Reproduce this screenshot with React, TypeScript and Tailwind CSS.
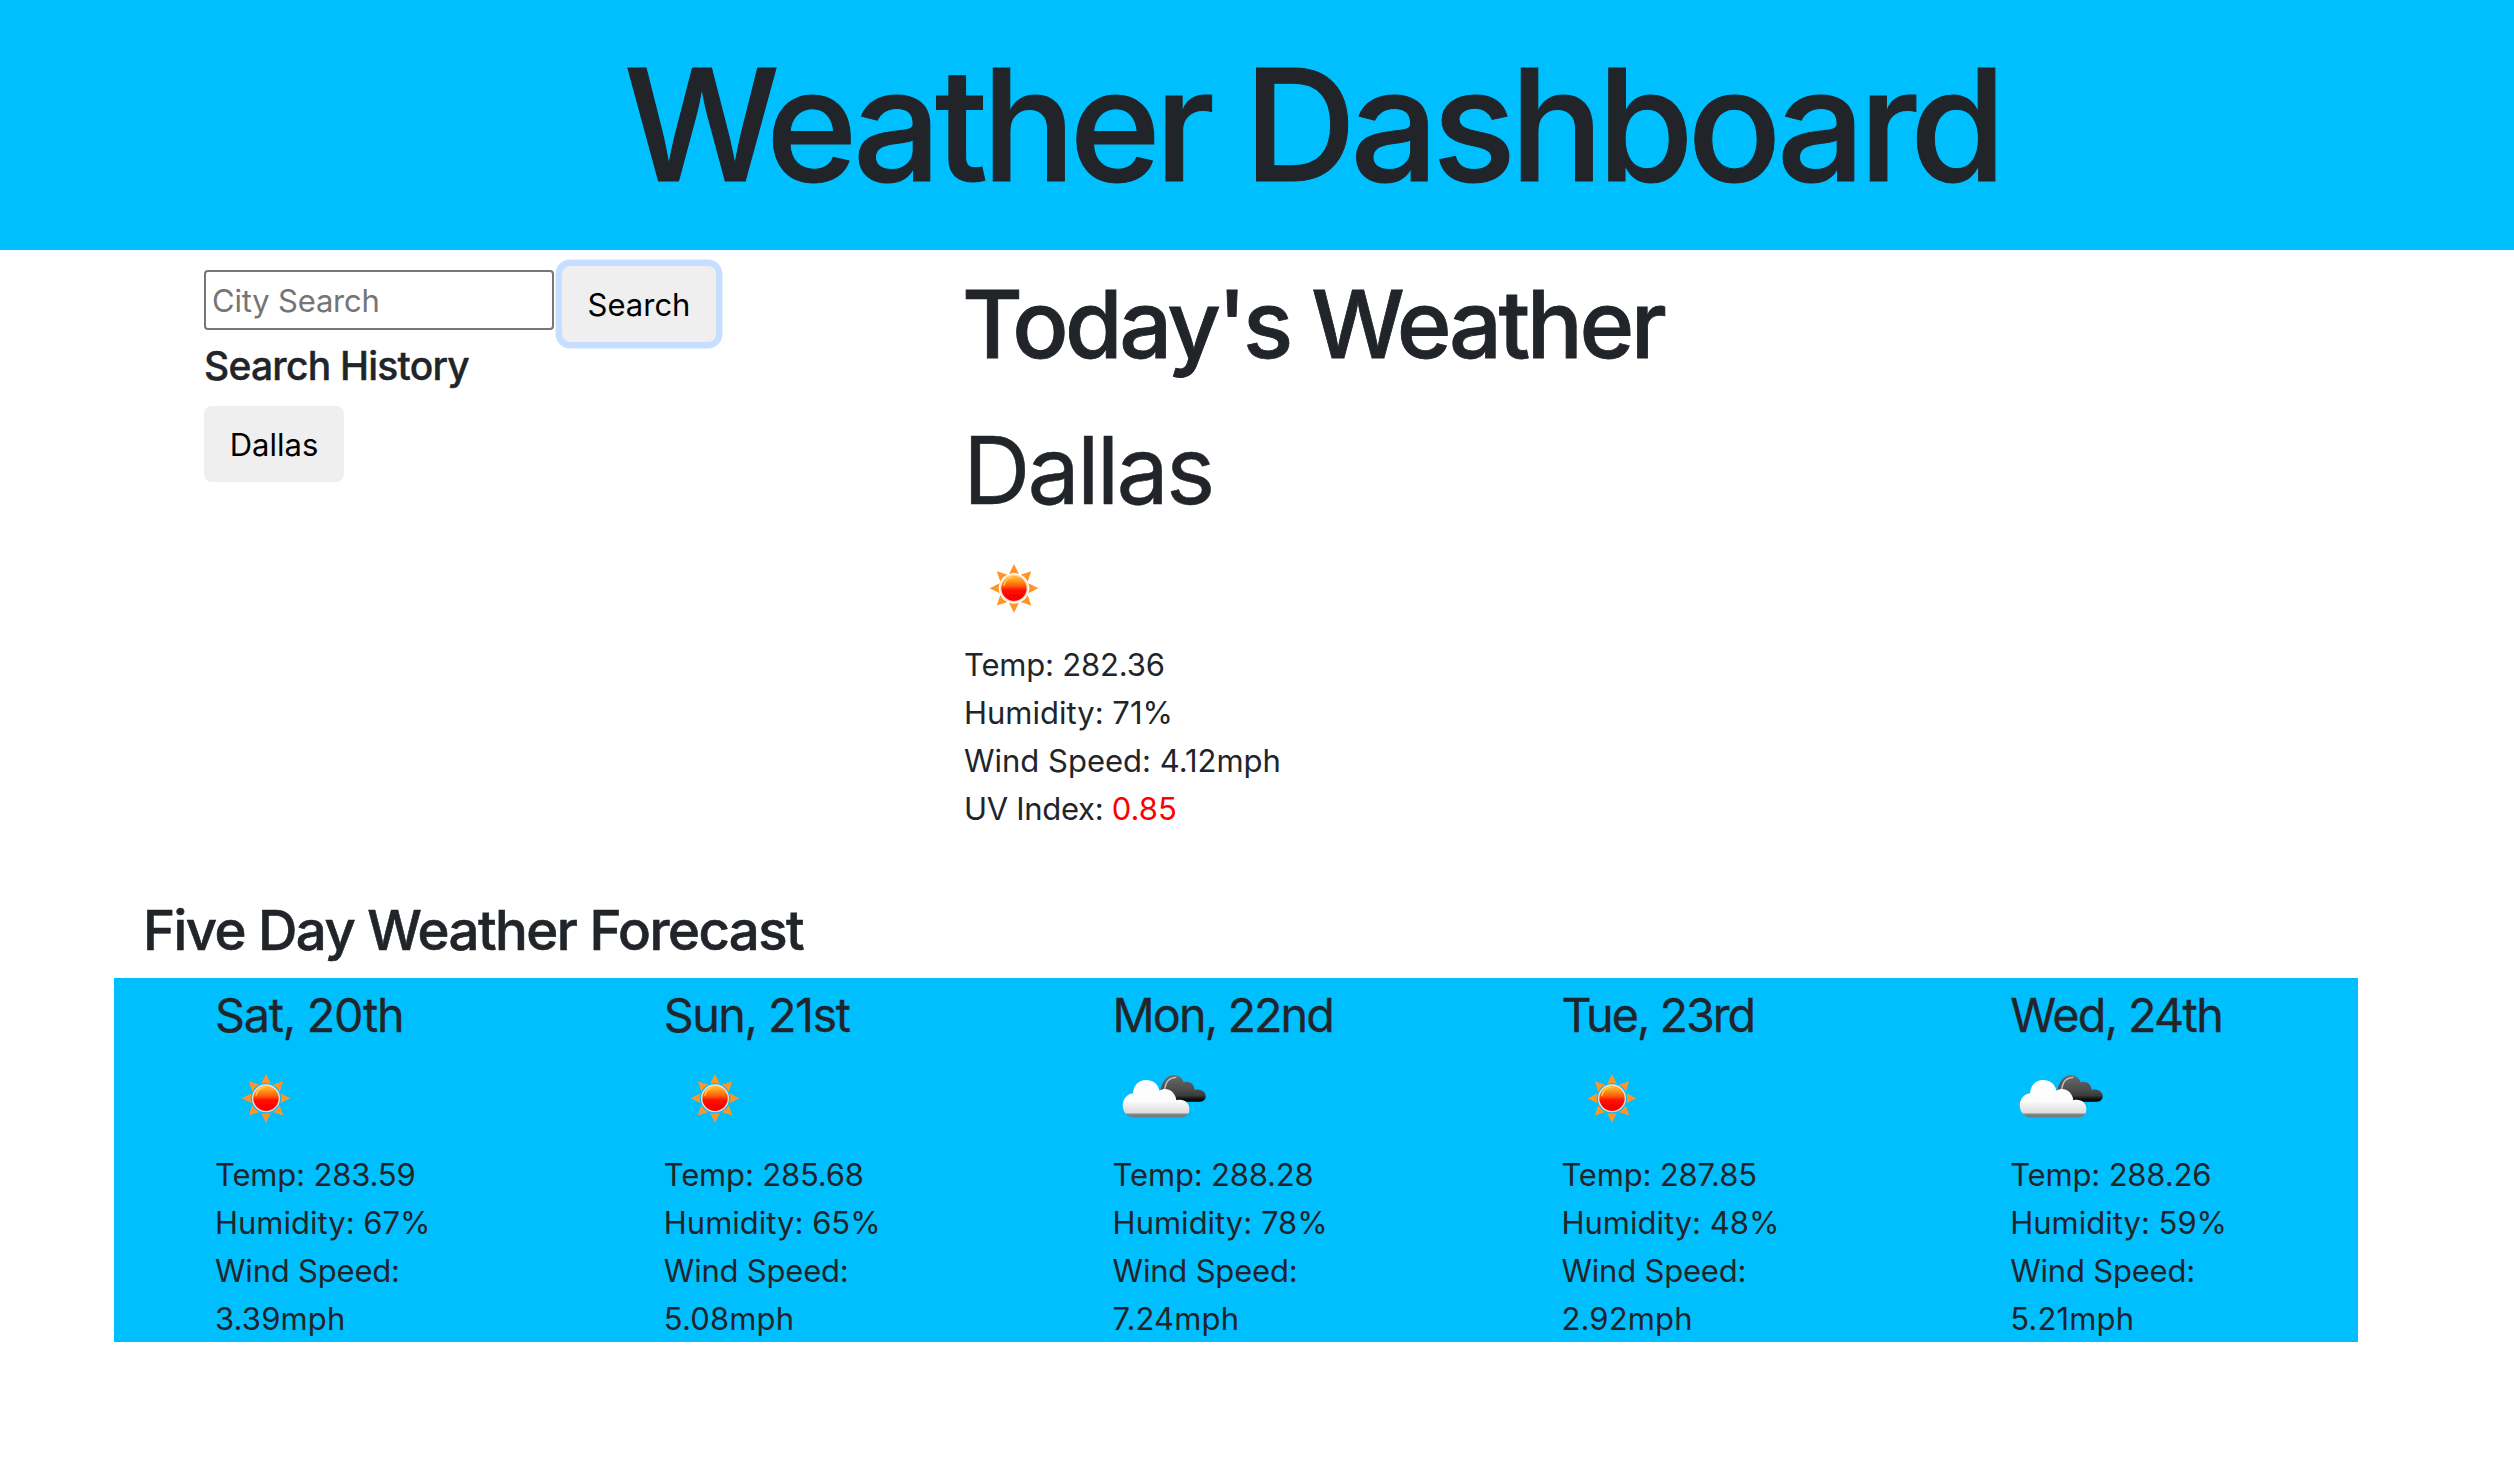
type Sky = 'sun' | 'clouds';

type Day = {
  label: string;
  tracking: string;
  sky: Sky;
  temp: string;
  humidity: string;
  wind: string;
};

const days: Day[] = [
  { label: 'Sat, 20th', tracking: 'tracking-[-1.25px]', sky: 'sun', temp: '283.59', humidity: '67%', wind: '3.39mph' },
  { label: 'Sun, 21st', tracking: 'tracking-[-1.5px]', sky: 'sun', temp: '285.68', humidity: '65%', wind: '5.08mph' },
  { label: 'Mon, 22nd', tracking: 'tracking-[-1.9px]', sky: 'clouds', temp: '288.28', humidity: '78%', wind: '7.24mph' },
  { label: 'Tue, 23rd', tracking: 'tracking-[-2px]', sky: 'sun', temp: '287.85', humidity: '48%', wind: '2.92mph' },
  { label: 'Wed, 24th', tracking: 'tracking-[-1.65px]', sky: 'clouds', temp: '288.26', humidity: '59%', wind: '5.21mph' },
];

const rays = [0, 45, 90, 135, 180, 225, 270, 315];

function SunIcon() {
  return (
    <svg className="block size-[100px]" viewBox="-48 -54 300 300" aria-label="Clear sky">
      <defs>
        <linearGradient id="sun-ball" x1="0" y1="0" x2="0" y2="1">
          <stop offset="0" stopColor="#ffc24a" />
          <stop offset="0.2" stopColor="#ff9a1c" />
          <stop offset="0.42" stopColor="#ff5a08" />
          <stop offset="0.58" stopColor="#ff0a00" />
          <stop offset="1" stopColor="#fb0000" />
        </linearGradient>
        <filter id="sun-soft" x="-20%" y="-20%" width="140%" height="140%">
          <feGaussianBlur stdDeviation="1.7" />
        </filter>
      </defs>
      <g filter="url(#sun-soft)">
        {rays.map((a) => (
          <path
            key={a}
            d="M102 24 L117 54 Q102 48 87 54 Z"
            fill="#ff9526"
            transform={`rotate(${a} 102 97)`}
          />
        ))}
        <circle cx="102" cy="97" r="40" fill="url(#sun-ball)" stroke="#ffdccb" strokeWidth="4" />
        <path d="M72 88 Q76 66 98 64" fill="none" stroke="#ffd23c" strokeWidth="4" strokeLinecap="round" />
      </g>
    </svg>
  );
}

function CloudsIcon() {
  return (
    <svg className="block size-[100px]" viewBox="10.8 -51 300 300" aria-label="Broken clouds">
      <defs>
        <linearGradient id="cloud-dark" gradientUnits="userSpaceOnUse" x1="0" y1="30" x2="0" y2="112">
          <stop offset="0" stopColor="#6a6a6a" />
          <stop offset="0.55" stopColor="#4c4c4c" />
          <stop offset="0.75" stopColor="#3a3a3a" />
          <stop offset="0.92" stopColor="#050505" />
          <stop offset="1" stopColor="#333333" />
        </linearGradient>
        <linearGradient id="cloud-light" gradientUnits="userSpaceOnUse" x1="0" y1="45" x2="0" y2="158">
          <stop offset="0" stopColor="#ffffff" />
          <stop offset="0.55" stopColor="#fcfcfc" />
          <stop offset="0.87" stopColor="#dcdcdc" />
          <stop offset="0.91" stopColor="#858585" />
          <stop offset="1" stopColor="#6f6f6f" />
        </linearGradient>
        <filter id="cloud-soft" x="-10%" y="-10%" width="120%" height="120%">
          <feGaussianBlur stdDeviation="1.7" />
        </filter>
      </defs>
      <g filter="url(#cloud-soft)">
        <path
          d="M150 76 C156 50 168 31 190 31 C205 31 215 40 220 52 C236 46 252 58 253 75 C270 70 286 80 286 94 C286 104 278 111 268 111 L190 111 Z"
          fill="url(#cloud-dark)"
        />
        <path d="M163 72 C166 50 178 37 198 37" fill="none" stroke="#c4c4c4" strokeWidth="4" />
        <path
          d="M70 157 C48 157 37 139 37 121 C37 103 50 87 68 85 C69 62 84 45 107 45 C127 45 143 57 147 77 C168 64 195 79 198 106 C219 100 237 113 237 132 C237 147 228 157 212 157 Z"
          fill="url(#cloud-light)"
        />
      </g>
    </svg>
  );
}

const WeatherIcon = ({ sky }: { sky: Sky }) => (sky === 'sun' ? <SunIcon /> : <CloudsIcon />);

export default function App() {
  return (
    <div className="h-[1460px] w-full overflow-hidden bg-white font-['Inter',sans-serif] text-[31px] leading-[48px] text-[#212529]">
      <header className="h-[250px] bg-[#00bfff] pl-[624px]">
        <h1 className="whitespace-nowrap text-[155.5px] leading-[250px] font-medium tracking-[-6.1px] [-webkit-text-stroke:1px_#212529]">
          Weather Dashboard
        </h1>
      </header>

      <main>
        <div className="flex h-[646px] pt-4">
          <aside className="w-[964px] pl-[204px]">
            <div className="flex h-[76px] items-start gap-2">
              <input
                type="text"
                placeholder="City Search"
                className="mt-1 h-[60px] w-[350px] rounded-[4px] border-2 border-[#767676] bg-white pl-[6px] tracking-[-0.2px] placeholder:text-[#757575]"
              />
              <button className="h-[76px] w-[154px] rounded-lg bg-[#efefef] pt-[2px] text-black ring-[6.4px] ring-[#c6deff]">
                Search
              </button>
            </div>
            <h2 className="text-[39px] leading-[48px] font-medium tracking-[-0.77px] [-webkit-text-stroke:0.4px_#212529]">
              Search History
            </h2>
            <button className="mt-4 h-[76px] w-[140px] rounded-lg bg-[#efefef] pt-[2px] text-black">Dallas</button>
          </aside>

          <section>
            <h2 className="-ml-0.5 pt-px text-[93.3px] leading-[116px] font-medium tracking-[-3.46px] [-webkit-text-stroke:0.8px_#212529]">
              Today's Weather
            </h2>
            <h3 className="mt-4 -ml-px text-[93.3px] leading-[144px] tracking-[-2.86px] [-webkit-text-stroke:0.5px_#212529]">
              Dallas
            </h3>
            <div className="-mt-[5px] mb-[3px]">
              <SunIcon />
            </div>
            <p className="tracking-[-0.18px]">Temp: 282.36</p>
            <p>Humidity: 71%</p>
            <p>Wind Speed: 4.12mph</p>
            <p>
              <span className="tracking-[-0.3px]">UV Index: </span>
              <span className="text-[#ff0000]">0.85</span>
            </p>
          </section>
        </div>

        <h2 className="h-[82px] pl-[143px] text-[54.5px] leading-[68px] font-medium tracking-[-1.53px] [-webkit-text-stroke:0.6px_#212529]">
          Five Day Weather Forecast
        </h2>

        <section className="ml-[114px] grid h-[364px] w-[2244px] grid-cols-5 bg-[#00bfff]">
          {days.map((day) => (
            <article key={day.label} className="pt-px pr-24 pl-[101px]">
              <h3 className={`text-[46.7px] leading-[72px] [-webkit-text-stroke:0.3px_#212529] ${day.tracking}`}>{day.label}</h3>
              <div className="-mt-[3px] mb-[3px] ml-px">
                <WeatherIcon sky={day.sky} />
              </div>
              <p className="tracking-[-0.17px]">Temp: {day.temp}</p>
              <p>Humidity: {day.humidity}</p>
              <p className="tracking-[-0.2px]">Wind Speed:</p>
              <p className="tracking-[0.15px]">{day.wind}</p>
            </article>
          ))}
        </section>
      </main>
    </div>
  );
}
